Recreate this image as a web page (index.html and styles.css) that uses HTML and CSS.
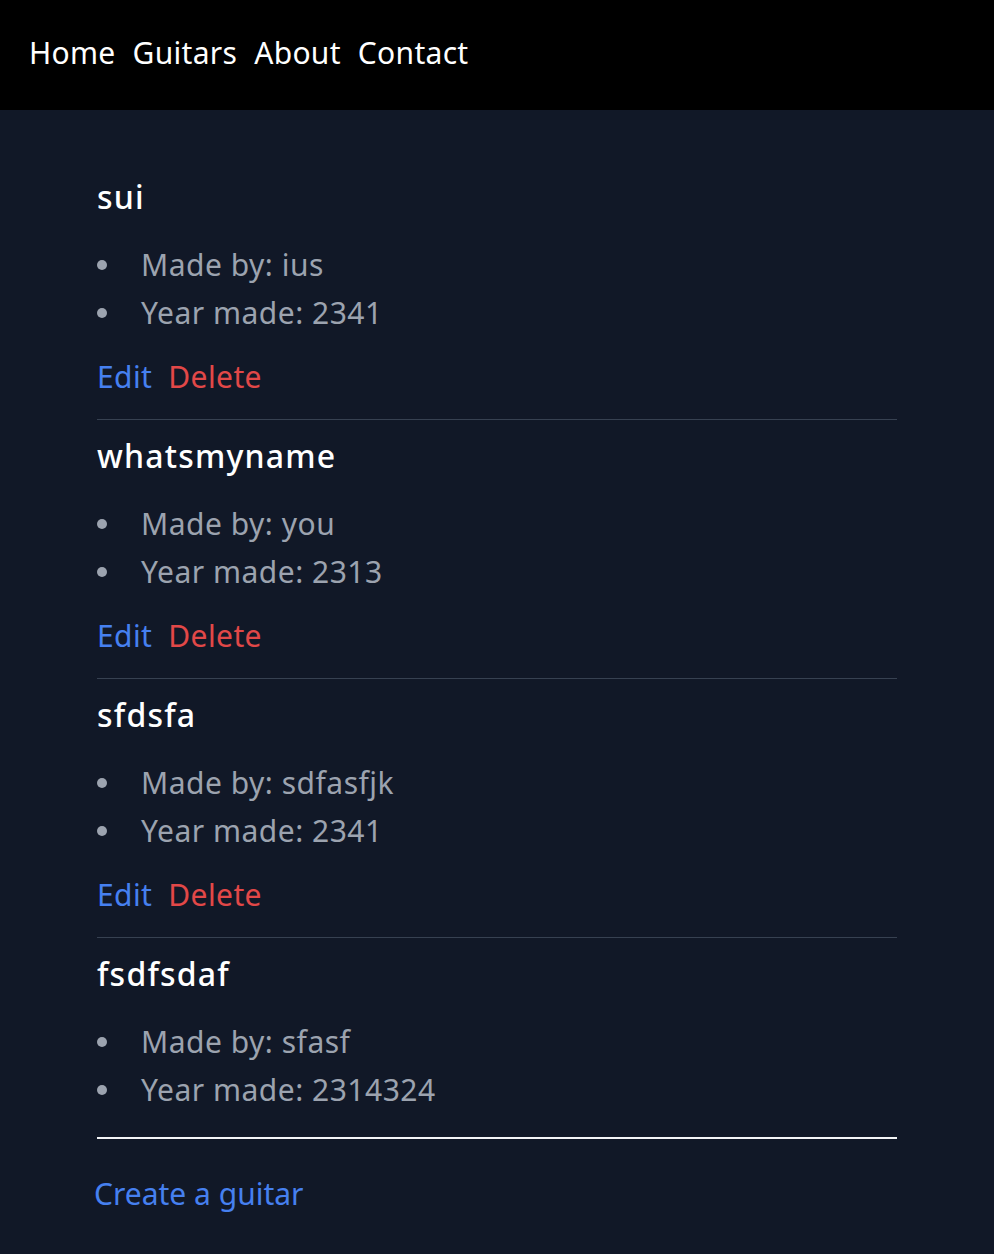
FILE: index.html
```html
<!DOCTYPE html>
<html>
<head>
<meta charset="utf-8">
<link rel="stylesheet" href="styles.css">
</head>
<body>
<nav class="nav">
  <a href="#">Home</a>
  <a href="#">Guitars</a>
  <a href="#">About</a>
  <a href="#">Contact</a>
</nav>
<main class="main">
  <div class="list">
    <section class="item">
      <h2 class="name">sui</h2>
      <ul class="facts">
        <li>Made by: ius</li>
        <li>Year made: 2341</li>
      </ul>
      <div class="actions"><a class="edit" href="#">Edit</a><a class="delete" href="#">Delete</a></div>
    </section>
    <section class="item">
      <h2 class="name">whatsmyname</h2>
      <ul class="facts">
        <li>Made by: you</li>
        <li>Year made: 2313</li>
      </ul>
      <div class="actions"><a class="edit" href="#">Edit</a><a class="delete" href="#">Delete</a></div>
    </section>
    <section class="item">
      <h2 class="name">sfdsfa</h2>
      <ul class="facts">
        <li>Made by: sdfasfjk</li>
        <li>Year made: 2341</li>
      </ul>
      <div class="actions"><a class="edit" href="#">Edit</a><a class="delete" href="#">Delete</a></div>
    </section>
    <section class="item last">
      <h2 class="name">fsdfsdaf</h2>
      <ul class="facts">
        <li>Made by: sfasf</li>
        <li>Year made: 2314324</li>
      </ul>
    </section>
  </div>
  <div class="create"><a href="#">Create a guitar</a></div>
</main>
</body>
</html>
```
FILE: styles.css
```css
* { box-sizing: border-box; }
html, body { margin: 0; padding: 0; }
body {
  background: #111827;
  font-family: "Noto Sans", "Open Sans", sans-serif;
  min-height: 1254px;
}
a { text-decoration: none; }
.nav {
  background: #000;
  height: 110px;
  display: flex;
  align-items: center;
  gap: 17px;
  padding: 0 0 4px 29px;
}
.nav a {
  color: #fff;
  font-size: 30px;
  line-height: 36px;
  letter-spacing: 0.3px;
}
.main {
  width: 800px;
  margin: 0 auto;
  padding-top: 51px;
}
.item {
  border-bottom: 1px solid #374151;
  padding-bottom: 24px;
}
.item.last {
  border-bottom: 2px solid #f3f4f6;
  padding-bottom: 23px;
}
.name {
  margin: 18px 0 0;
  font-weight: 500;
  color: #fff;
  font-size: 32px;
  line-height: 36px;
  letter-spacing: 1.2px;
}
.facts {
  margin: 26px 0 0;
  padding: 0;
  list-style: none;
  color: #9ca3af;
  font-size: 30px;
  line-height: 48px;
  letter-spacing: 0.5px;
}
.facts li {
  display: flex;
  align-items: center;
  gap: 34px;
}
.facts li::before {
  content: "";
  width: 10px;
  height: 10px;
  border-radius: 50%;
  background: #9ca3af;
  flex: none;
}
.actions {
  margin-top: 22px;
  display: flex;
  gap: 16px;
  font-size: 30px;
  line-height: 36px;
  letter-spacing: 0.4px;
}
.edit { color: #4680f0; }
.delete { color: #e24848; }
.create {
  margin: 37px 0 0 -3px;
  font-size: 30px;
  line-height: 36px;
}
.create a { color: #4680f0; }
```
